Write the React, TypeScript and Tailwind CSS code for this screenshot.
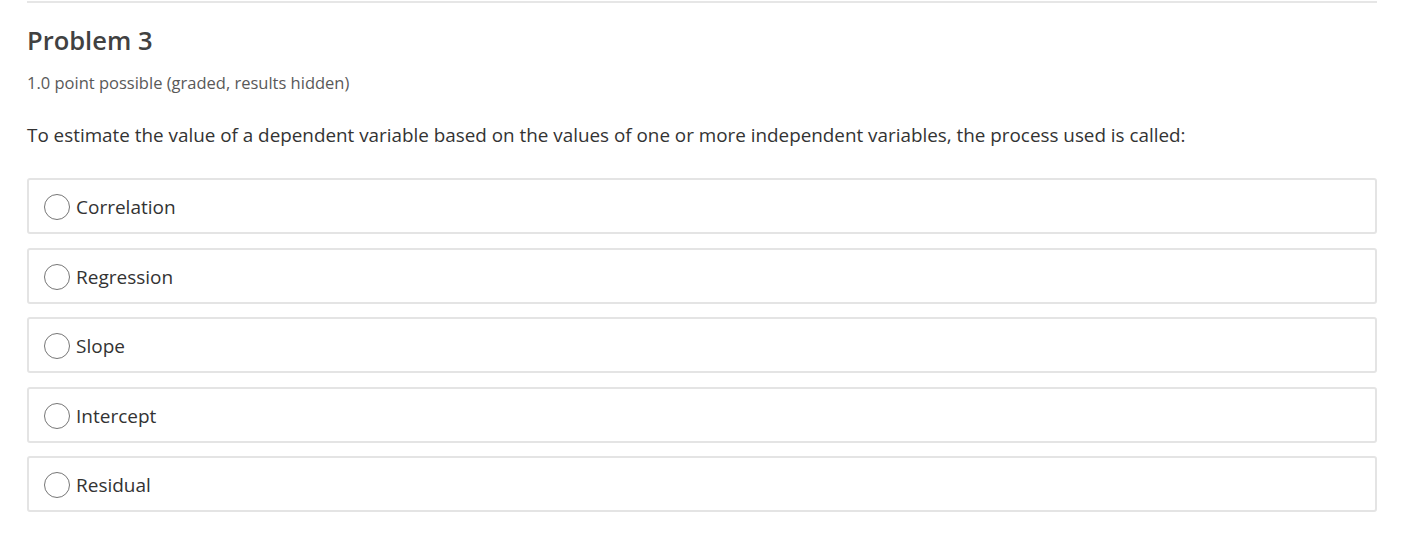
import React from 'react';

const options = ['Correlation', 'Regression', 'Slope', 'Intercept', 'Residual'];

const Option = ({ label }: { label: string }) => {
  return (
    <label className="flex h-[56px] items-center rounded-[3px] border-2 border-[#e4e4e4] bg-white pl-[15px]">
      <span className="mt-[2px] h-[26px] w-[26px] shrink-0 rounded-full border-[1.5px] border-[#767676]" />
      <span className="ml-[6px] mt-[3px] text-[19px] text-[#333333]">{label}</span>
    </label>
  );
};

export default function App() {
  return (
    <div className="min-h-[538px] bg-white pt-[1px] font-['Open_Sans',sans-serif]">
      <div className="ml-[27px] mr-[24px] border-t-2 border-[#e6e6e6] pt-[19px]">
        <h3 className="text-[25.5px] font-semibold leading-[36px] text-[#414141]">Problem 3</h3>
        <div className="mt-[14px] text-[16.5px] leading-[22px] text-[#595959]">
          1.0 point possible (graded, results hidden)
        </div>
        <p className="mt-[28px] text-[18.85px] leading-[26px] text-[#333333]">
          To estimate the value of a dependent variable based on the values of one or more independent variables, the
          process used is called:
        </p>
        <div className="mt-[30px] flex flex-col gap-[13.5px]">
          {options.map((o) => (
            <Option key={o} label={o} />
          ))}
        </div>
      </div>
    </div>
  );
}
